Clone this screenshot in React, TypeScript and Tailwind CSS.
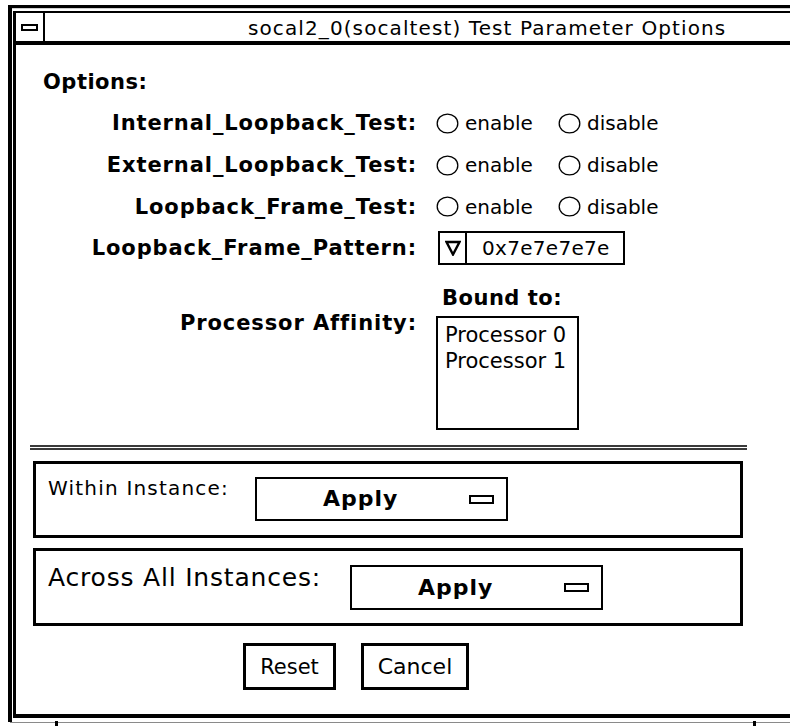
import React from "react";

function Radio({ label, w }: { label: string; w?: string }) {
  return (
    <div className={`flex items-center ${w ?? ""}`}>
      <svg width="23" height="21" viewBox="0 0 23 21" className="shrink-0">
        <ellipse cx="11.5" cy="10.5" rx="10.3" ry="9.4" fill="none" stroke="#000" strokeWidth="1.3" />
      </svg>
      <span className="ml-[6px] text-[20px] leading-[24px]">{label}</span>
    </div>
  );
}

function Label({ children, h }: { children: React.ReactNode; h: string }) {
  return (
    <div className={`flex items-center justify-end ${h} text-[21px] leading-[24px] font-bold tracking-[0.9px] whitespace-nowrap`}>
      {children}
    </div>
  );
}

function RadioRow({ h }: { h: string }) {
  return (
    <div className={`flex items-center ${h}`}>
      <Radio label="enable" w="w-[122px]" />
      <Radio label="disable" />
    </div>
  );
}

function ApplyButton({ w, h }: { w: string; h: string }) {
  return (
    <div className={`flex items-center ${w} ${h} border-2 border-black`}>
      <span className="pl-[66px] text-[22px] leading-[28px] font-bold tracking-[1px]">Apply</span>
      <div className="ml-auto mr-[12px] w-[25px] h-[9px] border-2 border-black" />
    </div>
  );
}

export default function App() {
  return (
    <div className="w-[790px] h-[726px] bg-white overflow-hidden text-black font-['DejaVu_Sans',sans-serif]">
      <div className="ml-[8px] mt-[5px] h-[717px] border-l-[4px] border-t-[3px] border-black flex flex-col">
        <div className="h-[3px] border-t border-[#cfcfcf]" />
        <div className="flex-1 flex flex-col ml-[1px] border-l-[3px] border-b-[4px] border-black mb-[4px]">
          {/* title bar */}
          <div className="flex h-[34px] border-t-2 border-b-4 border-black">
            <div className="w-[29px] border-r-2 border-black flex items-center justify-center">
              <div className="w-[17px] h-[7px] border-2 border-black" />
            </div>
            <div className="pl-[203px] pt-[1px] text-[20px] leading-[28px] tracking-[1.1px] whitespace-nowrap">
              socal2_0(socaltest) Test Parameter Options
            </div>
          </div>

          {/* content */}
          <div className="flex flex-col">
            <div className="mt-[25px] pl-[27px] text-[21px] leading-[24px] font-bold tracking-[0.5px]">Options:</div>

            <div className="mt-[8px] grid grid-cols-[401px_1fr] gap-x-[19px]">
              <Label h="h-[42px]">Internal_Loopback_Test:</Label>
              <RadioRow h="h-[42px]" />
              <Label h="h-[42px]">External_Loopback_Test:</Label>
              <RadioRow h="h-[42px]" />
              <Label h="h-[41px]">Loopback_Frame_Test:</Label>
              <RadioRow h="h-[41px]" />
              <Label h="h-[42px]">Loopback_Frame_Pattern:</Label>
              <div className="flex items-center h-[42px]">
                <div className="ml-[2px] flex w-[187px] h-[34px] border-2 border-black">
                  <div className="w-[27px] border-r-2 border-black flex items-center justify-center">
                    <svg width="16" height="16" viewBox="0 0 16 16">
                      <polygon points="1.5,2 14.5,2 8,14.5" fill="none" stroke="#000" strokeWidth="2.4" strokeLinejoin="miter" />
                    </svg>
                  </div>
                  <div className="pl-[15px] flex items-center text-[20px] leading-[24px] tracking-[0.3px]">0x7e7e7e7e</div>
                </div>
              </div>

              <div />
              <div className="mt-[17px] ml-[6px] text-[21px] leading-[24px] font-bold tracking-[0.5px]">Bound to:</div>

              <div className="mt-[1px] flex justify-end items-start text-[21px] leading-[24px] font-bold tracking-[0.9px] whitespace-nowrap">
                Processor Affinity:
              </div>
              <div className="mt-[6px]">
                <div className="w-[143px] h-[114px] border-2 border-black pl-[7px] pt-[4px] text-[21px] leading-[26px]">
                  <div>Processor 0</div>
                  <div>Processor 1</div>
                </div>
              </div>
            </div>

            {/* separator */}
            <div className="mt-[15px] ml-[14px] w-[717px] h-[5px] border-t-2 border-b-2 border-[#3a3a3a]" />

            {/* within instance */}
            <div className="mt-[11px] ml-[17px] w-[710px] h-[77px] border-[3px] border-black flex items-start">
              <div className="pl-[12px] pt-[12px] w-[219px] text-[20px] leading-[24px] tracking-[1.2px] whitespace-nowrap">Within Instance:</div>
              <div className="mt-[13px]">
                <ApplyButton w="w-[253px]" h="h-[44px]" />
              </div>
            </div>

            {/* across all instances */}
            <div className="mt-[10px] ml-[17px] w-[710px] h-[78px] border-[3px] border-black flex items-start">
              <div className="pl-[12px] pt-[12px] w-[314px] text-[25px] leading-[30px] tracking-[0.8px] whitespace-nowrap">Across All Instances:</div>
              <div className="mt-[14px]">
                <ApplyButton w="w-[253px]" h="h-[45px]" />
              </div>
            </div>

            {/* buttons */}
            <div className="mt-[17px] flex gap-[25px] pl-[227px]">
              <div className="w-[93px] h-[47px] border-[3px] border-black flex items-center justify-center text-[21px] leading-[24px]">Reset</div>
              <div className="w-[108px] h-[47px] border-[3px] border-black flex items-center justify-center text-[22px] leading-[24px]">Cancel</div>
            </div>
          </div>
        </div>
      </div>
      {/* bottom strip */}
      <div className="relative h-[4px] ml-[10px] border-t border-[#8a8a8a]">
        <div className="absolute left-[45px] top-[-2px] w-[3px] h-[6px] bg-black" />
        <div className="absolute left-[743px] top-[-2px] w-[3px] h-[6px] bg-black" />
      </div>
    </div>
  );
}
